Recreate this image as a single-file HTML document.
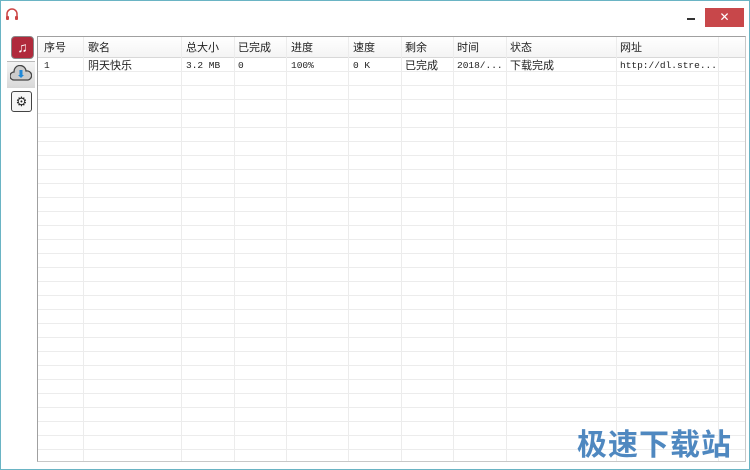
<!DOCTYPE html><html><head><style>
body{margin:0;width:750px;height:470px;overflow:hidden;background:#fff;font-family:"Liberation Sans","Noto Sans CJK SC",sans-serif;}
.win{position:absolute;left:0;top:0;width:748px;height:468px;border:1px solid #6ab4c4;background:#fff}
.tbl{position:absolute;left:36px;top:35px;width:707px;height:424px;border:1px solid #a0a0a0;border-right-color:#c8c8c8;border-bottom-color:#c8c8c8;
background-image:repeating-linear-gradient(to bottom,transparent 0 13px,#ececec 13px 14px);background-position:0 21px;background-repeat:repeat}
.hdr{position:absolute;left:0;top:0;width:707px;height:20px;background:linear-gradient(#fff,#f4f4f4);border-bottom:1px solid #d8d8d8}
.c{position:absolute;top:0;height:424px;border-left:1px solid #ececec}
.h{position:absolute;top:4px;font-size:11px;line-height:14px;color:#222}
.r{position:absolute;top:22px;font-size:11px;line-height:14px;color:#222}
.m{font-family:"Liberation Mono",monospace;font-size:9.5px;color:#222}
</style></head><body><div class="win">
<svg style="position:absolute;left:4px;top:7px" width="14" height="13" viewBox="0 0 14 13"><path d="M2 9V6a5 5 0 0 1 10 0v3" fill="none" stroke="#c44" stroke-width="1.5"/><rect x="1" y="8" width="3" height="4" rx="1" fill="#c44"/><rect x="10" y="8" width="3" height="4" rx="1" fill="#c44"/></svg>
<div style="position:absolute;left:686px;top:17px;width:8px;height:2px;background:#333"></div>
<div style="position:absolute;left:704px;top:7px;width:39px;height:19px;background:#c8474a;color:#fff;font-size:12px;text-align:center;line-height:19px">✕</div>
<div style="position:absolute;left:10px;top:35px;width:21px;height:21px;border-radius:4px;background:#b02a3c;border:1px solid #888;color:#fff;font-size:14px;text-align:center;line-height:21px">♫</div>
<div style="position:absolute;left:6px;top:60px;width:28px;height:26px;background:linear-gradient(#f4f4f4,#d8d8d8);border-top:1px solid #bbb"></div>
<svg style="position:absolute;left:9px;top:64px" width="22" height="18" viewBox="0 0 22 18"><path d="M4 15a4 4 0 0 1 0-8a6 6 0 0 1 12-1a4.5 4.5 0 0 1 2 9z" fill="#ccc" stroke="#444" stroke-width="1.3"/><path d="M11 5v6" stroke="#1e88d8" stroke-width="3"/><path d="M8 10l3 3 3-3z" fill="#1e88d8"/></svg>
<div style="position:absolute;left:10px;top:90px;width:19px;height:19px;border:1px solid #444;border-radius:3px;background:#f6f6f6;color:#222;font-size:13px;text-align:center;line-height:19px">⚙</div>
<div class="tbl"><div class="hdr"></div>
<div class="c" style="left:45px"></div><div class="c" style="left:143px"></div><div class="c" style="left:196px"></div><div class="c" style="left:248px"></div><div class="c" style="left:310px"></div><div class="c" style="left:363px"></div><div class="c" style="left:415px"></div><div class="c" style="left:468px"></div><div class="c" style="left:578px"></div><div class="c" style="left:680px"></div>
<span class="h" style="left:6px">序号</span><span class="h" style="left:50px">歌名</span><span class="h" style="left:148px">总大小</span><span class="h" style="left:200px">已完成</span><span class="h" style="left:253px">进度</span><span class="h" style="left:315px">速度</span><span class="h" style="left:367px">剩余</span><span class="h" style="left:419px">时间</span><span class="h" style="left:472px">状态</span><span class="h" style="left:582px">网址</span>
<span class="r m" style="left:6px">1</span><span class="r" style="left:50px">阴天快乐</span><span class="r m" style="left:148px">3.2 MB</span><span class="r m" style="left:200px">0</span><span class="r m" style="left:253px">100%</span><span class="r m" style="left:315px">0 K</span><span class="r" style="left:367px">已完成</span><span class="r m" style="left:419px">2018/...</span><span class="r" style="left:472px">下载完成</span><span class="r m" style="left:582px">http://dl.stre...</span>
</div>
<div style="position:absolute;left:576px;top:419px;font-size:30px;font-weight:bold;color:#4f88c0;letter-spacing:1px">极速下载站</div>
</div></body></html>
